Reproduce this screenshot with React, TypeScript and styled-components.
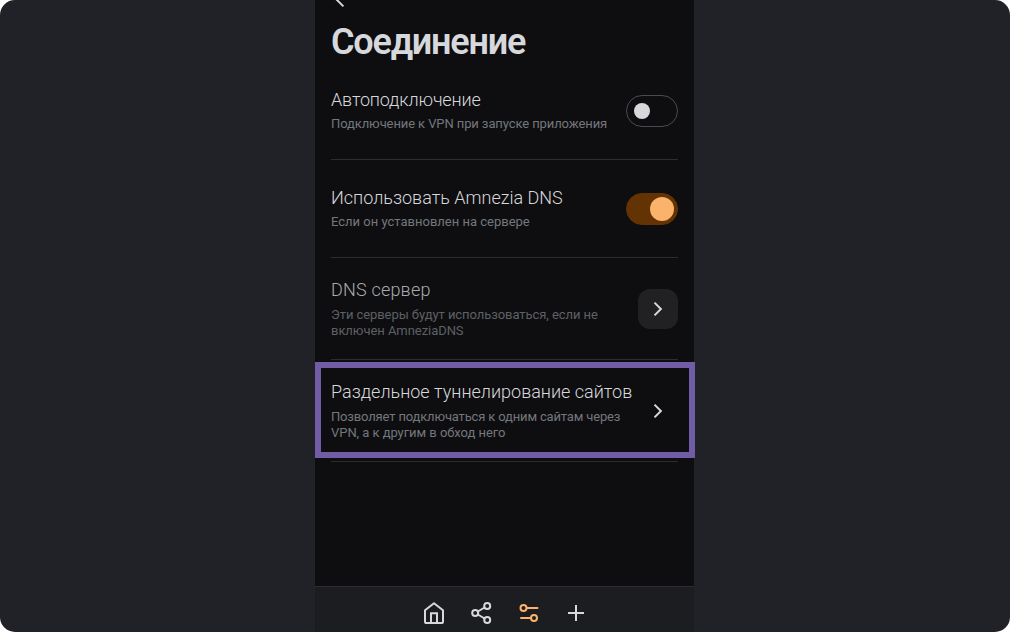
import React from "react";
import styled, { createGlobalStyle } from "styled-components";

const GlobalStyle = createGlobalStyle`
  * { box-sizing: border-box; }
  html, body { margin: 0; background: #fff; overflow: hidden; }
`;

const Stage = styled.div`
  width: 1010px;
  height: 632px;
  border-radius: 15px;
  overflow: hidden;
  background: #212227;
  display: flex;
  padding-left: 315px;
  font-family: Roboto, "Liberation Sans", sans-serif;
`;

const Phone = styled.main`
  width: 379px;
  height: 632px;
  background: #0e0e11;
  display: flex;
  flex-direction: column;
  flex-shrink: 0;
`;

const Header = styled.header`
  height: 62px;
  padding: 0 16px;
  flex-shrink: 0;
`;

const BackButton = styled.button`
  display: block;
  width: 24px;
  height: 20px;
  border: 0;
  padding: 0;
  background: none;
  overflow: hidden;
  svg { display: block; }
`;

const Heading = styled.h1`
  margin: 0;
  font: 600 36px/44px Roboto, "Liberation Sans", sans-serif;
  letter-spacing: -1.2px;
  color: #d7d8db;
  white-space: nowrap;
`;

const List = styled.div`
  flex: 1;
  display: flex;
  flex-direction: column;
`;

const Row = styled.section<{ $height: number }>`
  position: relative;
  height: ${(p) => p.$height}px;
  margin: 0 16px;
  border-bottom: 1px solid #2c2d30;
  display: flex;
  align-items: center;
  justify-content: space-between;
  flex-shrink: 0;
`;

const Title = styled.div<{ $dim?: boolean; $spacing: number }>`
  font-size: 18px;
  line-height: 22px;
  font-weight: 300;
  letter-spacing: ${(p) => p.$spacing}px;
  color: ${(p) => (p.$dim ? "#a9aaad" : "#d7d8db")};
`;

const Copy = styled.div<{ $tall?: boolean }>`
  display: flex;
  flex-direction: column;
  white-space: nowrap;
  padding-top: ${(p) => (p.$tall ? 1 : 0)}px;
  ${Title} { margin-bottom: ${(p) => (p.$tall ? 6 : 5)}px; }
`;

const Line = styled.div<{ $dim?: boolean; $spacing: number }>`
  font-size: 13px;
  line-height: 16px;
  font-weight: 400;
  letter-spacing: ${(p) => p.$spacing}px;
  color: ${(p) => (p.$dim ? "#5e6064" : "#74777c")};
`;

const Switch = styled.div<{ $on?: boolean }>`
  width: 52px;
  height: 32px;
  border-radius: 16px;
  border: 1px solid ${(p) => (p.$on ? "#633303" : "#494b50")};
  background: ${(p) => (p.$on ? "#633303" : "transparent")};
  display: flex;
  align-items: center;
  justify-content: ${(p) => (p.$on ? "flex-end" : "flex-start")};
  padding: 0 ${(p) => (p.$on ? 3 : 7)}px;
`;

const Knob = styled.span<{ $on?: boolean }>`
  width: ${(p) => (p.$on ? 24 : 16)}px;
  height: ${(p) => (p.$on ? 24 : 16)}px;
  border-radius: 50%;
  background: ${(p) => (p.$on ? "#fbb26a" : "#d7d8db")};
`;

const ArrowButton = styled.button<{ $filled?: boolean }>`
  width: 40px;
  height: 40px;
  border: 0;
  border-radius: 12px;
  padding: 0;
  background: ${(p) => (p.$filled ? "#212123" : "transparent")};
  display: flex;
  align-items: center;
  justify-content: center;
  flex-shrink: 0;
`;

const Highlight = styled.div`
  position: absolute;
  top: 2px;
  left: -16px;
  width: 380px;
  height: 96px;
  border: 6px solid #705da6;
  pointer-events: none;
`;

const TabBar = styled.nav`
  height: 46px;
  flex-shrink: 0;
  border-top: 1px solid #2c2d30;
  background: #1c1d21;
  display: flex;
  justify-content: center;
  gap: 23.33px;
  padding: 14px 0 0 1px;
`;

const Icon: React.FC<{ color?: string; children: React.ReactNode }> = ({ color = "#d7d8db", children }) => (
  <svg width="24" height="24" viewBox="0 0 24 24" fill="none" stroke={color} strokeWidth="2" strokeLinejoin="round" strokeLinecap="round">
    {children}
  </svg>
);

const Arrow: React.FC<{ filled?: boolean }> = ({ filled }) => (
  <ArrowButton $filled={filled}>
    <svg width="24" height="24" viewBox="0 0 24 24" fill="none" stroke="#d7d8db" strokeWidth="2">
      <path d="M8.5 5.6 14.9 12 8.5 18.4" />
    </svg>
  </ArrowButton>
);

export default function App() {
  return (
    <>
      <GlobalStyle />
      <Stage>
        <Phone>
          <Header>
            <BackButton aria-label="Назад">
              <svg width="24" height="20" viewBox="0 0 24 20" fill="none" stroke="#d7d8db" strokeWidth="2">
                <path d="M12.4 6.4 5.4 -.6 12.4 -7.6" />
              </svg>
            </BackButton>
            <Heading>Соединение</Heading>
          </Header>
          <List>
            <Row $height={98}>
              <Copy>
                <Title $spacing={-0.16}>Автоподключение</Title>
                <Line $spacing={-0.1}>Подключение к VPN при запуске приложения</Line>
              </Copy>
              <Switch><Knob /></Switch>
            </Row>
            <Row $height={98}>
              <Copy>
                <Title $spacing={0}>Использовать Amnezia DNS</Title>
                <Line $spacing={0}>Если он уставновлен на сервере</Line>
              </Copy>
              <Switch $on><Knob $on /></Switch>
            </Row>
            <Row $height={102}>
              <Copy $tall>
                <Title $dim $spacing={0.2}>DNS сервер</Title>
                <Line $dim $spacing={-0.07}>Эти серверы будут использоваться, если не</Line>
                <Line $dim $spacing={-0.05}>включен AmneziaDNS</Line>
              </Copy>
              <Arrow filled />
            </Row>
            <Row $height={102}>
              <Copy $tall>
                <Title $spacing={0}>Раздельное туннелирование сайтов</Title>
                <Line $spacing={-0.16}>Позволяет подключаться к одним сайтам через</Line>
                <Line $spacing={-0.05}>VPN, а к другим в обход него</Line>
              </Copy>
              <Arrow />
              <Highlight />
            </Row>
          </List>
          <TabBar>
            <Icon>
              <path d="M3 9.2 12 2.2 21 9.2V20.5a1.6 1.6 0 0 1-1.6 1.6H4.6A1.6 1.6 0 0 1 3 20.5Z" />
              <path d="M9 22V12.2h6V22" strokeLinejoin="miter" />
            </Icon>
            <Icon>
              <circle cx="18.2" cy="5" r="3" />
              <circle cx="6.2" cy="12" r="3" />
              <circle cx="18.2" cy="19" r="3" />
              <path d="m8.8 10.5 6.8-4M8.8 13.5l6.8 4" />
            </Icon>
            <Icon color="#fbb26a">
              <circle cx="6.5" cy="7" r="3" />
              <path d="M10 7h10.5M4 17h9.5" />
              <circle cx="17" cy="17" r="3" />
            </Icon>
            <Icon>
              <path d="M4 12h16M12 4v16" strokeLinecap="butt" />
            </Icon>
          </TabBar>
        </Phone>
      </Stage>
    </>
  );
}
